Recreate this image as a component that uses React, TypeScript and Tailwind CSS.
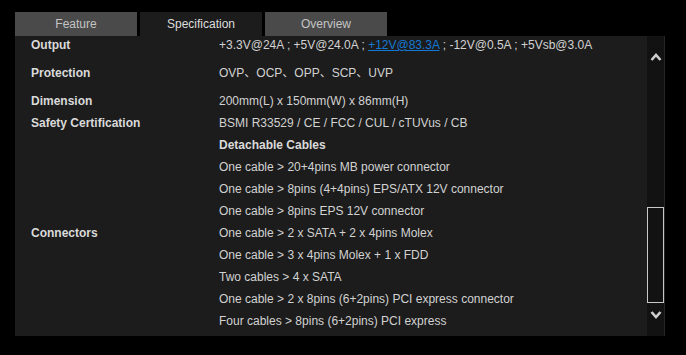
import React from "react";

const font = { fontFamily: '"Liberation Sans", Arial, "Noto Sans CJK SC", sans-serif' };

const Chevron = ({ up }: { up?: boolean }) => (
  <svg width="12" height="10" viewBox="0 0 12 10" className="block">
    <path
      d={up ? "M1.5 8 L6 3 L10.5 8" : "M1.5 2 L6 7 L10.5 2"}
      fill="none"
      stroke="#cfcfcf"
      strokeWidth="2.6"
      strokeLinejoin="miter"
    />
  </svg>
);

const connectors = [
  "One cable > 20+4pins MB power connector",
  "One cable > 8pins (4+4pins) EPS/ATX 12V connector",
  "One cable > 8pins EPS 12V connector",
  "One cable > 2 x SATA + 2 x 4pins Molex",
  "One cable > 3 x 4pins Molex + 1 x FDD",
  "Two cables > 4 x SATA",
  "One cable > 2 x 8pins (6+2pins) PCI express connector",
  "Four cables > 8pins (6+2pins) PCI express",
];

export default function App() {
  return (
    <div className="w-[686px] h-[355px] bg-black pt-[12px] pl-[15px] overflow-hidden" style={font}>
      <div className="flex gap-[3px] h-[24px]">
        <div className="w-[122px] h-[24px] bg-[#4a4a4a] text-[#c4c4c4] text-[12px] flex items-center justify-center">Feature</div>
        <div className="w-[122px] h-[24px] bg-[#1c1c1c] text-[#dcdcdc] text-[12px] flex items-center justify-center">Specification</div>
        <div className="w-[122px] h-[24px] bg-[#4a4a4a] text-[#c4c4c4] text-[12px] flex items-center justify-center">Overview</div>
      </div>
      <div className="w-[650px] h-[300px] bg-[#1c1c1c] flex">
        <div className="flex-1 overflow-hidden">
          <div className="-mt-[2px] pl-[16px] text-[12px] leading-[22px] text-[#d2d2d2]">
            <div className="flex mb-[6px]">
              <div className="w-[188px] font-bold text-[#dadada]">Output</div>
              <div>
                +3.3V@24A ; +5V@24.0A ; <span className="text-[#1479d6] underline">+12V@83.3A</span> ; -12V@0.5A ; +5Vsb@3.0A
              </div>
            </div>
            <div className="flex mb-[6px]">
              <div className="w-[188px] font-bold text-[#dadada]">Protection</div>
              <div>OVP、OCP、OPP、SCP、UVP</div>
            </div>
            <div className="flex">
              <div className="w-[188px] font-bold text-[#dadada]">Dimension</div>
              <div>200mm(L) x 150mm(W) x 86mm(H)</div>
            </div>
            <div className="flex">
              <div className="w-[188px] font-bold text-[#dadada]">Safety Certification</div>
              <div>BSMI R33529 / CE / FCC / CUL / cTUVus / CB</div>
            </div>
            <div className="flex items-center">
              <div className="w-[188px] font-bold text-[#dadada]">Connectors</div>
              <div className="flex flex-col">
                <div className="font-bold text-[#dadada]">Detachable Cables</div>
                {connectors.map((c) => (
                  <div key={c}>{c}</div>
                ))}
              </div>
            </div>
          </div>
        </div>
        <div className="w-[18px] h-full bg-[#121212] border-r border-[#262626] flex flex-col items-center">
          <div className="h-[36px] flex items-center justify-center mt-[3px]">
            <Chevron up />
          </div>
          <div className="flex-1" />
          <div className="w-[17px] h-[96px] border-[1.5px] border-[#c8c8c8] bg-[#121212]" />
          <div className="h-[33px] flex items-start justify-center pt-[7px]">
            <Chevron />
          </div>
        </div>
      </div>
    </div>
  );
}
